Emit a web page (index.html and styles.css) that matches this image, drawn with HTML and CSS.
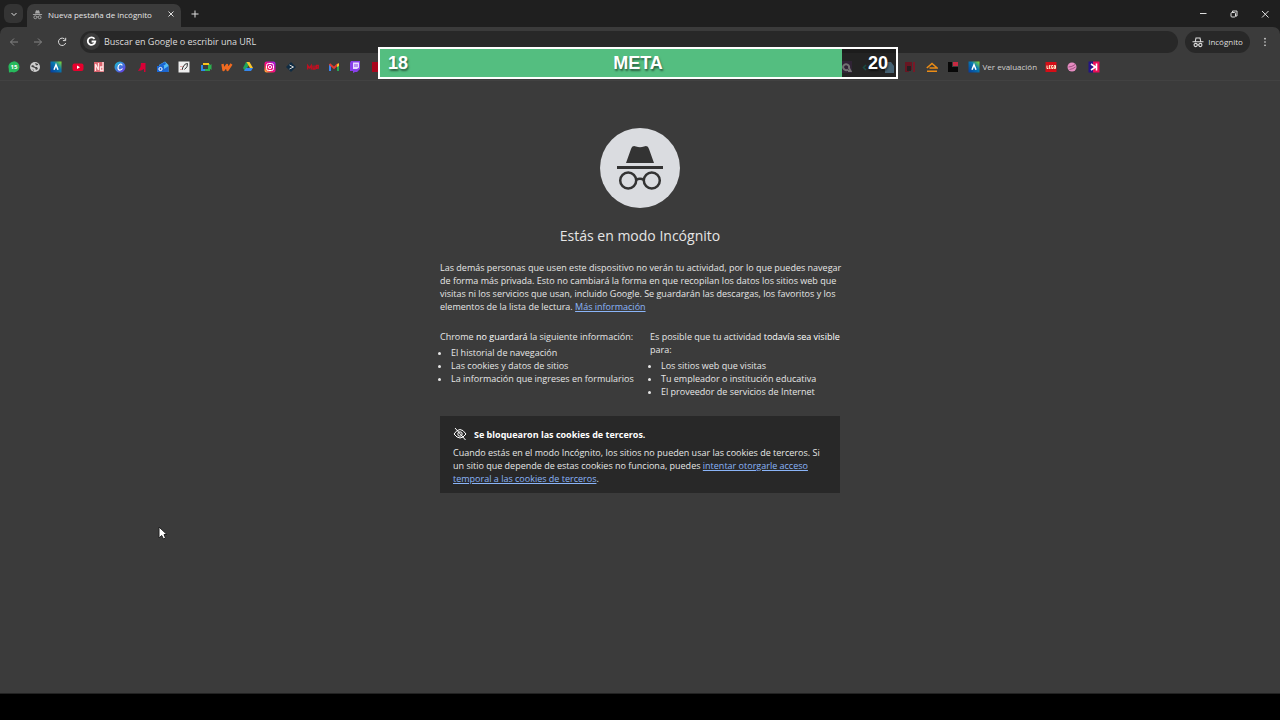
FILE: index.html
```html
<!DOCTYPE html>
<html lang="es">
<head>
  <meta charset="UTF-8" />
  <title>Nueva pestaña de incógnito</title>
  <link rel="stylesheet" href="styles.css">
</head>
<body>
  <svg class="defs">
    <symbol id="incognito" viewBox="0 0 24 24">
      <path d="M6.5 10 8.3 3.6Q8.8 2 10.3 2.7Q12 3.5 13.7 2.7Q15.2 2 15.7 3.6L17.5 10Z" />
      <path d="M2 11h20v2H2z" />
      <g fill="none" stroke="currentColor" stroke-width="2">
        <circle cx="7.3" cy="18" r="3.2" />
        <circle cx="16.7" cy="18" r="3.2" />
        <path d="M10.5 17.5q1.5-1 3 0" />
      </g>
    </symbol>
    <symbol id="incognito-outline" viewBox="0 0 24 24">
      <g fill="none" stroke="currentColor" stroke-width="2.2">
        <path d="M6.500 11 8 4h8l1.500 7M1 11.500h22" />
        <circle cx="7.3" cy="18" r="3.2" />
        <circle cx="16.7" cy="18" r="3.2" />
        <path d="M10.500 17.500h3" />
      </g>
    </symbol>
    <linearGradient id="alura" x1="0" y1="1" x2="1" y2="0">
      <stop offset="0" stop-color="#063a9c" /><stop offset=".6" stop-color="#087bb0" /><stop offset="1" stop-color="#8de32c" />
    </linearGradient>
    <linearGradient id="canva" x1="0" y1="0" x2="1" y2="1">
      <stop offset="0" stop-color="#12c7d0" /><stop offset="1" stop-color="#702be8" />
    </linearGradient>
    <linearGradient id="insta" x1="0" y1="1" x2="1" y2="0">
      <stop offset="0" stop-color="#ffc928" /><stop offset=".4" stop-color="#fa0c74" /><stop offset="1" stop-color="#9b20ee" />
    </linearGradient>
    <symbol id="alura-icon" viewBox="0 0 12 12">
      <path fill="url(#alura)" d="M.5.5h11v11H.5z" />
      <path fill="none" stroke="#fff" stroke-width="1.500" d="m4 8.800 2-5 2 5" />
    </symbol>
  </svg>

  <header>
    <div class="tabs">
      <button class="tab-search" aria-label="Buscar pestañas">
        <svg viewBox="0 0 12 12"><path class="line" d="m3.5 5 2.5 2.5L8.500 5" /></svg>
      </button>
      <div class="tab">
        <svg class="tab-icon"><use href="#incognito" /></svg>
        <span>Nueva pestaña de incógnito</span>
        <button aria-label="Cerrar pestaña"><svg viewBox="0 0 12 12"><path class="line" d="m3.500 3.500 5 5m0-5-5 5" /></svg></button>
      </div>
      <button class="new-tab" aria-label="Pestaña nueva"><svg viewBox="0 0 12 12"><path class="line" d="M6 2.500v7M2.500 6h7" /></svg></button>
      <div class="window-buttons">
        <button aria-label="Minimizar"><svg viewBox="0 0 12 12"><path class="line" d="M3 5.500h6.500" /></svg></button>
        <button aria-label="Restaurar"><svg viewBox="0 0 12 12"><rect class="line" x="3" y="4.500" width="4.500" height="4.500" rx="1" /><path class="line" d="M4.500 4V3h4.500v5H8" /></svg></button>
        <button aria-label="Cerrar"><svg viewBox="0 0 12 12"><path class="line" d="m3 3 6.500 6.500m0-6.500L3 9.500" /></svg></button>
      </div>
    </div>

    <div class="toolbar">
      <button class="muted" aria-label="Atrás"><svg viewBox="0 0 12 12"><path class="line" d="M10 6H2.500M6 2.500 2.500 6 6 9.500" /></svg></button>
      <button class="muted" aria-label="Adelante"><svg viewBox="0 0 12 12"><path class="line" d="M2 6h7.500M6 2.500 9.500 6 6 9.500" /></svg></button>
      <button aria-label="Volver a cargar"><svg viewBox="0 0 12 12"><path class="line" d="M9.300 3.800A3.700 3.700 0 1 0 9.700 7M9.700 1.800v2.800H6.900" /></svg></button>
      <div class="omnibox">
        <span class="google"><svg viewBox="0 0 12 12"><path d="M9.300 3.100A4.100 4.100 0 1 0 10.100 6H6.100" /></svg></span>
        <input type="text" aria-label="Barra de direcciones" placeholder="Buscar en Google o escribir una URL">
      </div>
      <button class="profile"><svg><use href="#incognito-outline" /></svg>Incógnito</button>
      <button class="menu" aria-label="Menú"><svg viewBox="0 0 12 12"><circle cx="6" cy="2" r="1" /><circle cx="6" cy="6" r="1" /><circle cx="6" cy="10" r="1" /></svg></button>
    </div>

    <nav class="bookmarks" aria-label="Favoritos">
      <a href="#" aria-label="WhatsApp"><svg viewBox="0 0 12 12"><path fill="#27b95c" d="M1 11.500.7 7.500A5.500 5.500 0 1 1 4 11Z" /><text x="6" y="8" class="badge">15</text></svg></a>
      <a href="#" aria-label="Sitio web"><svg viewBox="0 0 12 12"><circle cx="6" cy="6" r="5" fill="#ccc" /><path fill="#444" d="m2 5 2-1 2 2h2l1 2-2 1-1-2-3-1ZM6 2l3 1v1l-2 .5ZM3 8l2 1v1Z" /></svg></a>
      <a href="#" aria-label="Alura"><svg><use href="#alura-icon" /></svg></a>
      <a href="#" aria-label="YouTube"><svg viewBox="0 0 12 12"><rect x=".5" y="2.500" width="11" height="7.500" rx="2" fill="#e8002d" /><path fill="#fff" d="M5 4.500v3.500l3-1.700Z" /></svg></a>
      <a href="#" aria-label="Notas"><svg viewBox="0 0 12 12"><path fill="#d9636d" d="M1 1h10v10H1z" /><path fill="none" stroke="#ffe3e4" stroke-width="1.300" d="M2.500 10V3l3 6V2M10 1v8.500H7.500V6H10" /></svg></a>
      <a href="#" aria-label="Canva"><svg viewBox="0 0 12 12"><circle cx="6" cy="6" r="5.500" fill="url(#canva)" /><path fill="none" stroke="#fff" stroke-width="1.200" d="M8 4.500C8 2 4 3 4 6.500S7 9.500 8.500 7.500" /></svg></a>
      <a href="#" aria-label="Adobe"><svg viewBox="0 0 12 12"><path fill="#d80036" d="M5 2h4.500v9H8V8L5 9.500 2 10l2.500-4Z" /></svg></a>
      <a href="#" aria-label="Outlook"><svg viewBox="0 0 12 12"><path fill="#55bdf5" d="m2 4 6-3.500L11.500 4v7H3z" /><path fill="#1b66d2" d="m2 4 6-3L9 3 4 6.500ZM0 5h7v6H0zM7 8l4.500-3v6H7z" /><circle cx="3.500" cy="8" r="1.600" fill="none" stroke="#fff" /></svg></a>
      <a href="#" aria-label="Dibujo"><svg viewBox="0 0 12 12"><path fill="#eee" d="M.5.5h11v11H.5z" /><path fill="none" stroke="#333" d="m4 9 1-3Q7 2 9.500 2.500 10 6 6.500 8.500" /><path stroke="#d9a3a3" d="M2 5.500h3M2 8.500h2" /></svg></a>
      <a href="#" aria-label="Meet"><svg viewBox="0 0 12 12"><path fill="none" stroke="#2d8ae8" stroke-width="2" d="M2 4v5h3" /><path fill="none" stroke="#2db24f" stroke-width="2" d="M5 9h4V3" /><path fill="none" stroke="#f9c31d" stroke-width="2" d="M3 3h6" /><path fill="#2db24f" d="m9 5 2.500-2v6L9 7z" /></svg></a>
      <a href="#" aria-label="Wattpad"><svg viewBox="0 0 12 12"><path fill="none" stroke="#f06a20" stroke-width="2.400" stroke-linejoin="round" d="m1.500 3 1 6L6 4l.5 5L10.500 3" /></svg></a>
      <a href="#" aria-label="Drive"><svg viewBox="0 0 12 12"><path fill="#20a35a" d="M4 1h2L7 4 3 10 1 7Z" /><path fill="#fbc52c" d="M4.500 1h3L11 7H8Z" /><path fill="#3586ed" d="M4 7h7l-2 3H2Z" /></svg></a>
      <a href="#" aria-label="Instagram"><svg viewBox="0 0 12 12"><rect x=".5" y=".5" width="11" height="11" rx="2" fill="url(#insta)" /><rect x="2.500" y="2.500" width="7" height="7" rx="2" fill="none" stroke="#fff" /><circle cx="6" cy="6" r="1.600" fill="none" stroke="#fff" /></svg></a>
      <a href="#" aria-label="Terminal"><svg viewBox="0 0 12 12"><path fill="#102c43" d="m6 1 5 5-5 5-5-5Z" /><path class="line" d="m4.500 4 4 2-4 2" /></svg></a>
      <a href="#" aria-label="Mu"><svg viewBox="0 0 12 12"><path fill="none" stroke="#c40e20" stroke-width="1.300" d="M.7 8.500V4.500L2.500 7l1.800-2.500v4M6 4.500v3.500h2V4.500M9.500 8V4.500h1.800V7H9.500" /></svg></a>
      <a href="#" aria-label="Gmail"><svg viewBox="0 0 12 12"><path fill="#3c83ee" d="M1 3h2v7H1z" /><path fill="#29a653" d="M9 4h2v6H9z" /><path fill="none" stroke="#e33b2f" stroke-width="2" d="M1.500 3 6 7l4-4" /><path fill="#fbc52c" d="M9 3.500 11 2v3L9 6z" /></svg></a>
      <a href="#" aria-label="Twitch"><svg viewBox="0 0 12 12"><path fill="#873fe8" d="M2 0h9v8l-3 3H6l-2 1V10H1V2z" /><path fill="#e7ddff" d="M4 1.500h6v5L8 8H4z" /><path stroke="#873fe8" d="M6 3v3M8 3v3" /></svg></a>
      <a href="#" aria-label="Netflix"><svg viewBox="0 0 12 12"><path fill="#a8051c" d="M1 1h10v10H1z" /></svg></a>
      <a href="#" class="after-meter" aria-label="Búsqueda"><svg viewBox="0 0 12 12"><path fill="#5b3a68" d="M0 0h12v12H0z" /><path fill="none" stroke="#fff" stroke-width="2" d="M8 8.500A3 3 0 1 1 9 7l1.500 3H8" /></svg></a>
      <a href="#" aria-label="Código"><svg viewBox="0 0 12 12"><path fill="none" stroke="#1f9c88" stroke-width="1.500" d="M4 4 1.500 6.500 4 9" /></svg></a>
      <a href="#" aria-label="Documento"><svg viewBox="0 0 12 12"><path fill="#8fd4ff" d="M2 1h6l3 4v7H2z" /></svg></a>
      <a href="#" aria-label="Panel"><svg viewBox="0 0 12 12"><path fill="#671622" d="M1 1h7v8H5v2H1z" /><path fill="#262022" d="M3 5h4v5H3z" /><path fill="#791827" d="M9 1h2v10H9z" /></svg></a>
      <a href="#" aria-label="Casa"><svg viewBox="0 0 12 12"><path fill="none" stroke="#eb8c16" stroke-width="1.600" d="m.8 7 5.200-4.500L11.200 7H3.500M1 10.200h10" /></svg></a>
      <a href="#" aria-label="Bloques"><svg viewBox="0 0 12 12"><path fill="#080808" d="M1 1h4v5h6v5H1z" /><path fill="#c62a42" d="M6 1h5v4H6z" /></svg></a>
      <a href="#" class="named"><svg><use href="#alura-icon" /></svg>Ver evaluación</a>
      <a href="#" class="extra" aria-label="LEGO"><svg viewBox="0 0 12 12"><path fill="#d50d16" d="M.5 1h11v10H.5z" /><path fill="none" stroke="#fff2d0" stroke-width="1" d="M2 4.500v3h1.300M5.500 4.500H4.300v3h1.200M4.300 6h1M8 4.500H6.700v3H8V6M9.200 4.500h1.300v3H9.200z" /></svg></a>
      <a href="#" class="extra" aria-label="Esfera"><svg viewBox="0 0 12 12"><circle cx="6" cy="6" r="4.500" fill="#e58cc1" /><path fill="none" stroke="#8c4470" stroke-width=".8" d="M2.500 6Q6 6 9 3.500M3.500 8.500Q7 8 9.500 6" /></svg></a>
      <a href="#" class="extra" aria-label="Kick"><svg viewBox="0 0 12 12"><path fill="#241585" d="M.5.5H6v11H.5z" /><path fill="#ec0e59" d="M5 .5h6.500v11H5z" /><path fill="none" stroke="#fff" stroke-width="1.600" d="M8.500 2.500v7M3 3l4.500 3L3 9" /></svg></a>
    </nav>
  </header>

  <main>
    <div class="hero">
      <svg viewBox="0 0 80 80" aria-hidden="true">
        <circle cx="40" cy="40" r="40" fill="#dadce0" />
        <path d="m26 35 5-14q1-4 5-2.500 4 1.500 8 0 4-1.500 5 2.500l5 14Z" />
        <path d="M17 38h46v3H17z" />
        <g fill="none" stroke="#333" stroke-width="2.500">
          <circle cx="28.200" cy="52.500" r="8" />
          <circle cx="51.800" cy="52.500" r="8" />
          <path d="M36 52q4-2.500 8 0" />
        </g>
      </svg>
    </div>
    <h1>Estás en modo Incógnito</h1>
    <p class="intro">Las demás personas que usen este dispositivo no verán tu actividad, por lo que puedes navegar de forma más privada. Esto no cambiará la forma en que recopilan los datos los sitios web que visitas ni los servicios que usan, incluido Google. Se guardarán las descargas, los favoritos y los elementos de la lista de lectura. <a href="#">Más información</a></p>
    <div class="columns">
      <section>
        Chrome <em>no guardará</em> la siguiente información:
        <ul>
          <li>El historial de navegación</li>
          <li>Las cookies y datos de sitios</li>
          <li>La información que ingreses en formularios</li>
        </ul>
      </section>
      <section>
        Es posible que tu actividad <em>todavía sea visible</em><br>para:
        <ul>
          <li>Los sitios web que visitas</li>
          <li>Tu empleador o institución educativa</li>
          <li>El proveedor de servicios de Internet</li>
        </ul>
      </section>
    </div>
    <section class="cookies">
      <h2>
        <svg viewBox="0 0 14 14"><path class="line" d="M1 7q6-9 12 0-6 8-12 0ZM2 1l10.500 12" /><circle class="line" cx="7" cy="7" r="2.200" /></svg>
        Se bloquearon las cookies de terceros.
      </h2>
      <p>Cuando estás en el modo Incógnito, los sitios no pueden usar las cookies de terceros. Si un sitio que depende de estas cookies no funciona, puedes <a href="#">intentar otorgarle acceso temporal a las cookies de terceros</a>.</p>
    </section>
  </main>

  <footer></footer>

  <div class="meter">
    <div class="meter-fill" style="width: 89.5%"></div>
    <span>18</span><span>META</span><span>20</span>
  </div>

  <svg class="cursor" viewBox="0 0 10 14"><path d="M1 1v11l2.700-2.500L5.500 13l2-1L6 8.500h3Z" /></svg>
</body>
</html>
```
FILE: styles.css
```css
* {
  box-sizing: border-box;
}

body {
  margin: 0;
  min-height: 100vh;
  display: flex;
  flex-direction: column;
  background: #3b3b3b;
  color: #e6e6e6;
  font-family: "Open Sans", "Noto Sans", sans-serif;
  font-size: 9px;
  line-height: 13px;
}

svg {
  display: block;
  flex: none;
  width: 12px;
  height: 12px;
  fill: currentColor;
}

.defs {
  position: absolute;
  width: 0;
  height: 0;
}

.line {
  fill: none;
  stroke: currentColor;
}

button {
  display: flex;
  align-items: center;
  justify-content: center;
  padding: 0;
  border: none;
  background: none;
  color: #dedede;
  font: inherit;
}

/* tab strip */
header {
  background: #1f1f1f;
}

.tabs {
  display: flex;
  align-items: center;
  height: 27px;
  padding-left: 4px;
}

.tab-search {
  width: 19px;
  height: 19px;
  border-radius: 6px;
  background: #343434;
}

.tab {
  display: flex;
  align-items: center;
  gap: 5px;
  align-self: flex-end;
  width: 154px;
  height: 23px;
  margin-left: 4px;
  padding: 0 4px 3px 5px;
  border-radius: 7px 7px 0 0;
  background: #3b3b3b;
  font-size: 8px;
  white-space: nowrap;
}

.tab-icon {
  width: 11px;
  height: 11px;
  color: #aaa;
}

.tab button {
  margin-left: auto;
}

.new-tab {
  margin-left: 8px;
}

.window-buttons {
  display: flex;
  margin-left: auto;
}

.window-buttons button {
  width: 31px;
  height: 27px;
}

/* toolbar */
.toolbar {
  display: flex;
  align-items: center;
  height: 29px;
  padding: 0 9px 0 8px;
  gap: 12px;
  border-radius: 7px 7px 0 0;
  background: #3b3b3b;
}

.toolbar .muted {
  color: #858585;
}

.omnibox {
  display: flex;
  align-items: center;
  flex: 1;
  gap: 4px;
  height: 22px;
  padding-left: 3px;
  border-radius: 11px;
  background: #282828;
}

.google {
  padding: 3px;
  border-radius: 50%;
  background: #3b3b3b;
}

.google svg {
  width: 11px;
  height: 11px;
}

.google path {
  fill: none;
  stroke: #fff;
  stroke-width: 2;
}

.omnibox input {
  flex: 1;
  padding: 0;
  border: none;
  outline: none;
  background: none;
  color: #e6e6e6;
  font: inherit;
}

.omnibox input::placeholder {
  color: #dedede;
}

.toolbar .profile {
  gap: 4px;
  width: 65px;
  height: 22px;
  margin-left: -5px;
  border-radius: 11px;
  background: #282828;
  font-size: 8px;
}

.toolbar .menu {
  width: 12px;
  margin-left: -3px;
}

.menu svg {
  width: 10px;
  height: 10px;
}

/* one bookmark per column, the named one takes four */
.bookmarks {
  display: grid;
  grid-template-columns: repeat(52, 1fr);
  align-items: center;
  height: 25px;
  padding: 0 167px 3px 3px;
  border-bottom: 1px solid #424242;
  background: #3b3b3b;
}

.bookmarks a {
  display: flex;
  align-items: center;
  justify-content: center;
  color: #d2d2d2;
  font-size: 8px;
  text-decoration: none;
  white-space: nowrap;
}

.bookmarks .after-meter {
  grid-column-start: 40;
}

.bookmarks .named {
  grid-column: span 4;
  gap: 3px;
  justify-content: flex-start;
  padding-left: 4px;
}

.bookmarks .extra {
  justify-content: flex-start;
  margin-left: -4px;
}

.badge {
  fill: #fff;
  font-size: 6px;
  font-weight: bold;
  text-anchor: middle;
}

/* page */
main {
  flex: 1;
  width: 400px;
  max-width: 100%;
  margin: 0 auto;
  padding-top: 47px;
}

.hero svg {
  width: 80px;
  height: 80px;
  margin: 0 auto;
  color: #333;
}

h1 {
  margin: 18px 0 15px;
  font-size: 14px;
  font-weight: normal;
  line-height: 20px;
  text-align: center;
}

p {
  margin: 0;
}

.intro {
  margin-right: -8px;
}

main a {
  color: #8ab4f8;
}

.columns {
  display: grid;
  grid-template-columns: repeat(2, minmax(0, 1fr));
  gap: 20px;
  margin-top: 17px;
  white-space: nowrap;
}

em {
  color: #fff;
  font-style: normal;
}

ul {
  margin: 3px 0 0;
  padding-left: 11px;
}

.cookies {
  margin-top: 18px;
  padding: 11px 13px 8px;
  background: #282828;
}

.cookies h2 {
  display: flex;
  align-items: center;
  gap: 7px;
  margin: 0 0 5px;
  color: #fff;
  font-size: 9px;
  line-height: 13px;
}

.cookies h2 svg {
  width: 14px;
  height: 14px;
}

footer {
  height: 27px;
  border-top: 1px solid #222;
  background: #000;
}

/* goal meter over the browser */
.meter {
  position: absolute;
  top: 47px;
  left: calc(50% - 262px);
  display: flex;
  align-items: center;
  justify-content: space-between;
  width: 520px;
  height: 32px;
  padding: 0 8px;
  border: 2px solid #fff;
  background: rgba(20, 20, 20, 0.6);
  color: #fff;
  font: bold 18px "Liberation Sans", Arial, sans-serif;
  text-shadow: 1px 2px 2px rgba(0, 0, 0, 0.5);
}

.meter-fill {
  position: absolute;
  inset: 0 auto 0 0;
  background: #54be80;
}

.meter span {
  position: relative;
}

.cursor {
  position: absolute;
  top: 526px;
  left: 158px;
  width: 10px;
  height: 14px;
  fill: #fff;
  stroke: #222;
}
```
